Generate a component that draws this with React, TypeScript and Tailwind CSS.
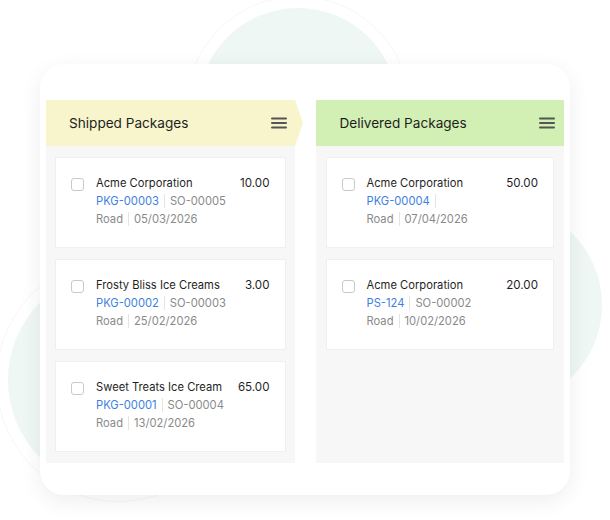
const shipped = [
  { name: "Acme Corporation", amount: "10.00", pkg: "PKG-00003", so: "SO-00005", date: "05/03/2026" },
  { name: "Frosty Bliss Ice Creams", amount: "3.00", pkg: "PKG-00002", so: "SO-00003", date: "25/02/2026" },
  { name: "Sweet Treats Ice Cream", amount: "65.00", pkg: "PKG-00001", so: "SO-00004", date: "13/02/2026" },
]

const delivered = [
  { name: "Acme Corporation", amount: "50.00", pkg: "PKG-00004", so: "", date: "07/04/2026" },
  { name: "Acme Corporation", amount: "20.00", pkg: "PS-124", so: "SO-00002", date: "10/02/2026" },
]

type Pkg = (typeof shipped)[number]

function MenuIcon() {
  return (
    <svg width="16" height="12" viewBox="0 0 16 12" className="shrink-0">
      <rect x="0" y="0.5" width="16" height="2" rx="1" fill="#555" />
      <rect x="0" y="5" width="16" height="2" rx="1" fill="#555" />
      <rect x="0" y="9.5" width="16" height="2" rx="1" fill="#555" />
    </svg>
  )
}

function PackageCard({ item }: { item: Pkg }) {
  return (
    <div className="h-[91px] bg-white border border-[#efefef] pt-[16px] pl-[15px] pr-[15px] flex gap-[12px]">
      <div className="mt-[4px] w-[13px] h-[13px] rounded-[3px] border border-[#c9c9c9] bg-white shrink-0" />
      <div className="flex-1 min-w-0 text-[11.2px] leading-[18px]">
        <div className="flex justify-between text-[#1f1f1f]">
          <span>{item.name}</span>
          <span className="text-[11.6px]">{item.amount}</span>
        </div>
        <div className="flex items-center">
          <span className="text-[#3d7fe0]">{item.pkg}</span>
          <span className="mx-[5px] w-px h-[14px] bg-[#e4e4e4]" />
          <span className="text-[#8a8a8a]">{item.so}</span>
        </div>
        <div className="flex items-center text-[#8a8a8a]">
          <span>Road</span>
          <span className="mx-[5px] w-px h-[14px] bg-[#e4e4e4]" />
          <span>{item.date}</span>
        </div>
      </div>
    </div>
  )
}

export default function App() {
  return (
    <div className="relative w-[610px] h-[520px] bg-white overflow-hidden" style={{ fontFamily: "Inter, 'Noto Sans', sans-serif" }}>
      {/* background blobs */}
      <div className="absolute left-[186px] top-[-4px] w-[224px] h-[224px] rounded-full border border-[#f7f7f7]" />
      <div className="absolute left-[198px] top-[8px] w-[200px] h-[200px] rounded-full bg-[#eff7f4]" />
      <div className="absolute left-[8px] top-[270px] w-[220px] h-[220px] rounded-full bg-[#eff7f4]" />
      <div className="absolute left-[-4px] top-[258px] w-[244px] h-[244px] rounded-full border border-[#f7f7f7]" />
      <div className="absolute left-[400px] top-[204px] w-[202px] h-[202px] rounded-full bg-[#eff7f4]" />

      <div className="absolute left-[40px] top-[64px] w-[530px] h-[431px] bg-white rounded-[24px] shadow-[0_6px_22px_rgba(0,0,0,0.07)] pt-[36px] px-[6px]">
        <div className="flex gap-[21px]">
          {/* shipped column */}
          <div className="w-[249px]">
            <div className="relative h-[46px] bg-[#f8f5cc] flex items-center justify-between pl-[23px] pr-[8px]">
              <span className="text-[13.6px] text-[#1f1f1f]">Shipped Packages</span>
              <MenuIcon />
              <div className="absolute right-[-8px] top-0 w-0 h-0 border-y-[23px] border-y-transparent border-l-[8px] border-l-[#f8f5cc]" />
            </div>
            <div className="h-[317px] bg-[#f7f7f7] px-[9px] pt-[11px] flex flex-col gap-[11px]">
              {shipped.map((p, i) => (
                <PackageCard key={i} item={p} />
              ))}
            </div>
          </div>

          {/* delivered column */}
          <div className="w-[249px]">
            <div className="h-[46px] bg-[#d3f0b4] flex items-center justify-between pl-[24px] pr-[9px]">
              <span className="text-[13.6px] text-[#1f1f1f]">Delivered Packages</span>
              <MenuIcon />
            </div>
            <div className="h-[317px] bg-[#f7f7f7] px-[10px] pt-[11px] flex flex-col gap-[11px]">
              {delivered.map((p, i) => (
                <PackageCard key={i} item={p} />
              ))}
            </div>
          </div>
        </div>
      </div>
    </div>
  )
}
